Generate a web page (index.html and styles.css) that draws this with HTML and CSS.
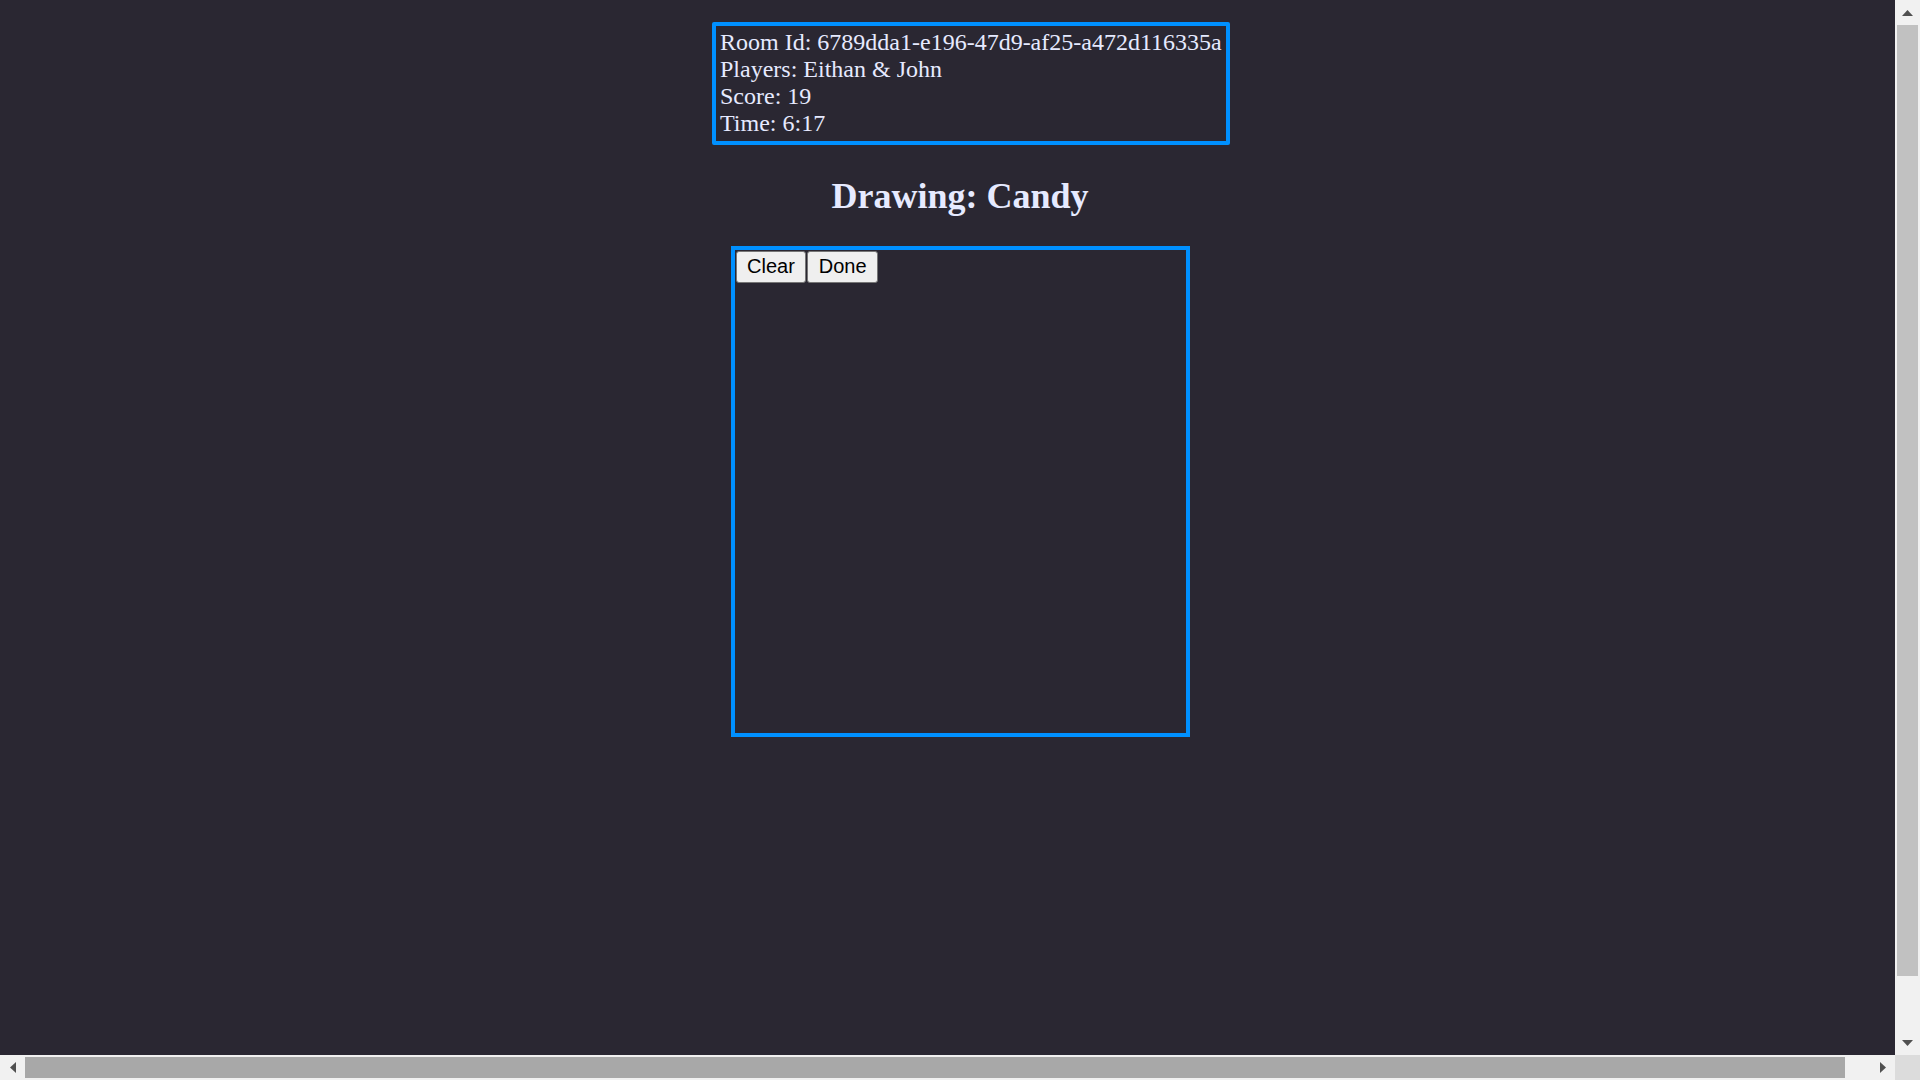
FILE: index.html
```html
<!DOCTYPE html>
<html lang="en">
<head>
<meta charset="utf-8">
<title>Drawing: Candy</title>
<link rel="stylesheet" href="styles.css">
</head>
<body>
<div class="window">
  <div class="main-row">
    <div class="viewport">
      <div class="page">
        <div class="info">Room Id: 6789dda1-e196-47d9-af25-a472d116335a<br>Players: Eithan &amp; John<br>Score: 19<br>Time: 6:17</div>
        <h2 class="title">Drawing: Candy</h2>
        <div class="board">
          <div class="tools">
            <button class="btn">Clear</button>
            <button class="btn">Done</button>
          </div>
        </div>
      </div>
    </div>
    <div class="vscroll">
      <div class="sb-btn"><svg width="11" height="6" viewBox="0 0 11 6"><polygon points="0,6 5.5,0 11,6" fill="#505050"/></svg></div>
      <div class="vtrack"><div class="vthumb"></div></div>
      <div class="sb-btn"><svg width="11" height="6" viewBox="0 0 11 6"><polygon points="0,0 11,0 5.5,6" fill="#505050"/></svg></div>
    </div>
  </div>
  <div class="bottom-row">
    <div class="hscroll">
      <div class="sb-btn"><svg width="6" height="11" viewBox="0 0 6 11"><polygon points="6,0 6,11 0,5.5" fill="#505050"/></svg></div>
      <div class="htrack"><div class="hthumb"></div></div>
      <div class="sb-btn"><svg width="6" height="11" viewBox="0 0 6 11"><polygon points="0,0 6,5.5 0,11" fill="#505050"/></svg></div>
    </div>
    <div class="corner"></div>
  </div>
</div>
</body>
</html>
```
FILE: styles.css
```css
html, body {
  margin: 0;
  padding: 0;
  height: 100%;
  overflow: hidden;
  background: #2a2732;
}

.window {
  display: flex;
  flex-direction: column;
  width: 1920px;
  height: 1080px;
}

.main-row {
  display: flex;
  flex: 1;
  min-height: 0;
}

.viewport {
  flex: 1;
  overflow: hidden;
  min-width: 0;
}

.page {
  width: 1920px;
  padding-top: 22px;
  font-family: "Liberation Serif", "Times New Roman", serif;
  font-size: 24px;
  color: #e6eaff;
}

.info {
  width: fit-content;
  margin-left: 712px;
  border: 4px solid #0090ff;
  border-radius: 2px;
  padding: 3px 4px 3.5px;
}

.title {
  margin: 30px 0 29px;
  text-align: center;
  font-size: 36px;
  font-weight: bold;
}

.board {
  box-sizing: border-box;
  width: 459px;
  height: 491px;
  margin: 0 auto;
  border: 4px solid #0090ff;
  padding: 1px;
}

.tools {
  display: flex;
  gap: 1px;
}

.btn {
  box-sizing: border-box;
  height: 32px;
  padding: 0 10.5px;
  font-family: "Liberation Sans", Arial, sans-serif;
  font-size: 20px;
  color: #000;
  background: #efefef;
  border: 1px solid #767676;
  border-radius: 3px;
}

.vscroll {
  width: 25px;
  background: #f1f1f1;
  display: flex;
  flex-direction: column;
}

.sb-btn {
  width: 25px;
  height: 25px;
  flex: none;
  display: flex;
  align-items: center;
  justify-content: center;
}

.vtrack {
  flex: 1;
  padding: 0 2px;
}

.vthumb {
  height: 951px;
  background: #c1c1c1;
}

.bottom-row {
  display: flex;
  height: 25px;
  flex: none;
}

.hscroll {
  flex: 1;
  display: flex;
  background: #f1f1f1;
}

.htrack {
  flex: 1;
  padding: 2px 0;
}

.hthumb {
  width: 1820px;
  height: 21px;
  background: #a8a8a8;
}

.corner {
  width: 25px;
  background: #dcdcdc;
}
```
